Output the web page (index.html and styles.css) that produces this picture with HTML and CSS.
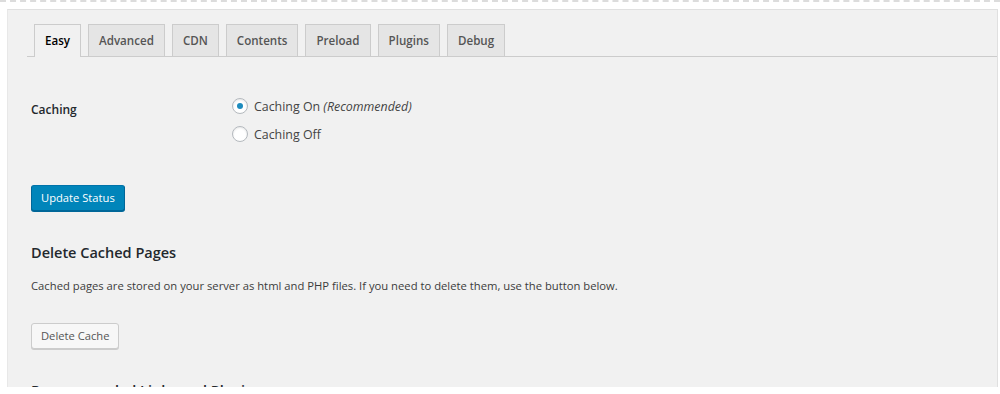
FILE: index.html
```html
<!DOCTYPE html>
<html lang="en">
<head>
    <meta charset="UTF-8">
    <title>WP Super Cache Settings</title>
    <link rel="stylesheet" href="styles.css">
</head>
<body>
    <div class="top-edge"></div>
    <div class="panel">
        <div class="nav-tabs">
            <a class="nav-tab active" href="#">Easy</a>
            <a class="nav-tab" href="#">Advanced</a>
            <a class="nav-tab" href="#">CDN</a>
            <a class="nav-tab" href="#">Contents</a>
            <a class="nav-tab" href="#">Preload</a>
            <a class="nav-tab" href="#">Plugins</a>
            <a class="nav-tab" href="#">Debug</a>
        </div>

        <div class="content">
            <div class="setting-row">
                <div class="setting-label">Caching</div>
                <div class="setting-field">
                    <label class="radio-line">
                        <input type="radio" name="caching" checked>
                        <span>Caching On <em>(Recommended)</em></span>
                    </label>
                    <label class="radio-line">
                        <input type="radio" name="caching">
                        <span>Caching Off</span>
                    </label>
                </div>
            </div>

            <button class="button button-primary">Update Status</button>

            <h3>Delete Cached Pages</h3>
            <p>Cached pages are stored on your server as html and PHP files. If you need to delete them, use the button below.</p>
            <button class="button">Delete Cache</button>

            <h3 class="next-heading">Recommended Links and Plugins</h3>
        </div>
    </div>
</body>
</html>
```

FILE: styles.css
```css
body {
    margin: 0;
    background-color: #ffffff;
    font-family: 'Open Sans', 'Noto Sans', sans-serif;
    font-size: 11.25px;
    color: #3c3c3c;
}

.top-edge {
    height: 0;
    border-top: 2px dashed #dcdcdc;
}

.panel {
    box-sizing: border-box;
    height: 378px;
    margin: 7px 2px 0 7px;
    padding-top: 14px;
    overflow: hidden;
    background-color: #f1f1f1;
    border-top: 1px solid #e0e0e0;
    border-left: 1px solid #e8e8e8;
    border-right: 1px solid #e0e0e0;
}

.nav-tabs {
    display: flex;
    margin-left: 19px;
    border-bottom: 1px solid #ccc;
}

.nav-tab {
    display: block;
    margin-left: 7px;
    margin-bottom: -1px;
    padding: 0 10px;
    height: 31px;
    line-height: 31px;
    border: 1px solid #ccc;
    border-bottom: none;
    background-color: #e5e5e5;
    color: #555;
    font-size: 11.6px;
    font-weight: 600;
    text-decoration: none;
}

.nav-tab.active {
    background-color: #f1f1f1;
    color: #000;
    height: 32px;
}

.content {
    padding-left: 23px;
}

.setting-row {
    display: flex;
    margin-top: 35px;
}

.setting-label {
    width: 201px;
    padding-top: 9px;
    line-height: 18px;
    font-size: 12px;
    font-weight: 600;
    color: #23282d;
}

.radio-line {
    display: flex;
    align-items: center;
    height: 28px;
}

.radio-line input {
    appearance: none;
    -webkit-appearance: none;
    box-sizing: border-box;
    width: 16px;
    height: 16px;
    margin: 0 6px 0 0;
    border: 1px solid #b4b9be;
    border-radius: 50%;
    background-color: #fff;
    box-shadow: inset 0 1px 2px rgba(0, 0, 0, 0.1);
    display: flex;
    align-items: center;
    justify-content: center;
}

.radio-line input:checked::before {
    content: "";
    width: 6px;
    height: 6px;
    border-radius: 50%;
    background-color: #1e8cbe;
}

.radio-line span {
    font-size: 12.4px;
    color: #444;
}

.button {
    display: block;
    box-sizing: border-box;
    height: 26px;
    padding: 0 9px;
    border: 1px solid #ccc;
    border-radius: 3px;
    background-color: #f7f7f7;
    box-shadow: 0 1px 0 #ccc;
    color: #555;
    font-family: inherit;
    font-size: 11.2px;
    line-height: 24px;
    cursor: pointer;
}

.button-primary {
    margin-top: 37px;
    background-color: #0085ba;
    border-color: #0073aa #006799 #006799;
    box-shadow: 0 1px 0 #006799;
    color: #fff;
}

h3 {
    margin: 32px 0 0;
    font-size: 14.5px;
    line-height: 20px;
    font-weight: 600;
    color: #23282d;
}

p {
    margin: 14px 0 28px;
    line-height: 18px;
}

.next-heading {
    margin-top: 32px;
}
```
